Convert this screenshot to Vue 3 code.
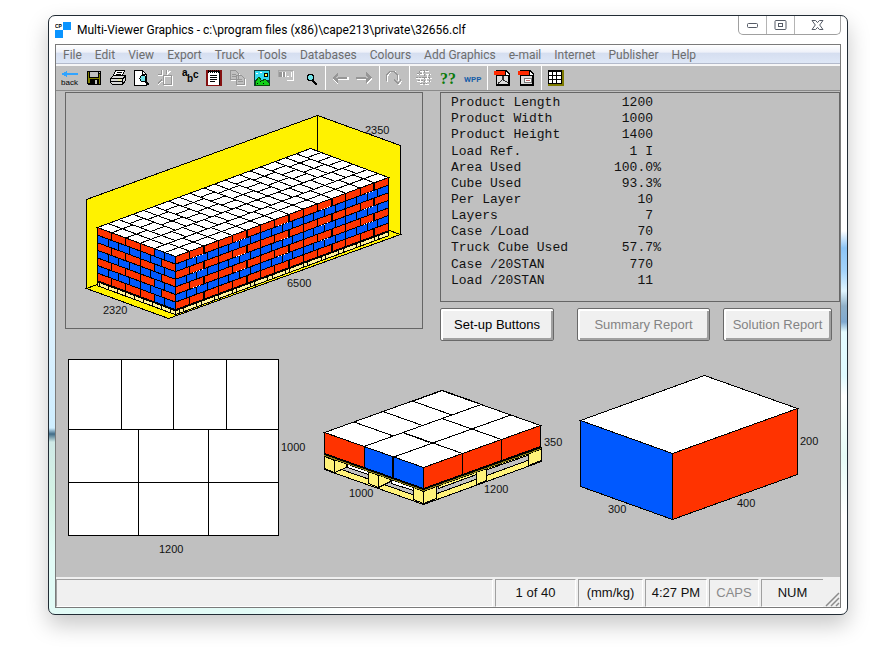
<script setup>
const menus = ['File', 'Edit', 'View', 'Export', 'Truck', 'Tools', 'Databases', 'Colours', 'Add Graphics', 'e-mail', 'Internet', 'Publisher', 'Help']

const toolGroups = [
  ['back', 'save', 'print', 'preview', 'fit', 'labels', 'notes', 'copy', 'picture', 'layout', 'search'],
  ['previous', 'next'],
  ['rotate'],
  ['analyse', 'help', 'wpp'],
  ['pdf', 'pdf report'],
  ['pattern'],
]

const facts = [
  ['Product Length', '1200', ''],
  ['Product Width', '1000', ''],
  ['Product Height', '1400', ''],
  ['Load Ref.', '1 I', '', true],
  ['Area Used', '100.0', '%'],
  ['Cube Used', '93.3', '%'],
  ['Per Layer', '10', ''],
  ['Layers', '7', ''],
  ['Case /Load', '70', ''],
  ['Truck Cube Used', '57.7', '%'],
  ['Case /20STAN', '770', '', true],
  ['Load /20STAN', '11', ''],
]

const RED = '#ff3300'
const BLUE = '#0059ff'

// Oblique projection: u runs along the right face, v along the left face, d is the drop below the top.
function projector(front, right, left, lengthU, lengthV) {
  return (u, v, d = 0) => [
    front[0] + ((right[0] - front[0]) * u) / lengthU + ((left[0] - front[0]) * v) / lengthV,
    front[1] + ((right[1] - front[1]) * u) / lengthU + ((left[1] - front[1]) * v) / lengthV + d,
  ]
}
const pts = (list) => list.map((p) => p.map((n) => n.toFixed(1)).join(',')).join(' ')

// One layer of a 1200 x 1000 load: two rows of three cases, one row of four.
function layerCells() {
  const cells = []
  for (let i = 0; i < 3; i++) {
    cells.push([i * 400, 0, 400, 300], [i * 400, 300, 400, 300])
  }
  for (let i = 0; i < 4; i++) cells.push([i * 300, 600, 300, 400])
  return cells
}
function topFace(p, [u, v, w, h]) {
  return pts([p(u, v), p(u + w, v), p(u + w, v + h), p(u, v + h)])
}

// Pallet view
const pp = projector([423.5, 467.5], [540.5, 425.5], [324.5, 432.5], 1200, 1000)
const palletTops = layerCells().map((c) => topFace(pp, c))
const palletSides = []
for (let i = 0; i < 3; i++) {
  palletSides.push({ fill: RED, points: pts([pp(i * 400, 0), pp(i * 400 + 400, 0), pp(i * 400 + 400, 0, 21), pp(i * 400, 0, 21)]) })
}
for (const [v, w, fill] of [[0, 300, BLUE], [300, 300, BLUE], [600, 400, RED]]) {
  palletSides.push({ fill, points: pts([pp(0, v), pp(0, v + w), pp(0, v + w, 21), pp(0, v, 21)]) })
}

// Truck view
const tp = projector([175.5, 256.5], [388.5, 177.5], [97.5, 227.5], 6000, 2200)
const LAYER = 7.6
const truckTops = []
for (let n = 0; n < 5; n++) {
  for (const [u, v, w, h] of layerCells()) truckTops.push(topFace(tp, [u + n * 1200, v, w, h]))
}
for (let n = 0; n < 6; n++) {
  for (const [u, v, w, h] of layerCells()) truckTops.push(topFace(tp, [v + n * 1000, 1000 + u, h, w]))
}
const truckSides = []
const gaps = []
const glints = []
for (let l = 0; l < 7; l++) {
  const a = l * LAYER
  const b = a + LAYER
  const odd = l % 2 === 0
  const size = odd ? 400 : 300
  for (let u = 0; u < 6000; u += size) {
    truckSides.push({ fill: odd ? RED : BLUE, points: pts([tp(u, 0, a), tp(u + size, 0, a), tp(u + size, 0, b), tp(u, 0, b)]) })
  }
  const cells = odd
    ? [[0, 300, BLUE], [300, 300, BLUE], [600, 400, RED], [1000, 400, RED], [1400, 400, RED], [1800, 400, RED]]
    : [[0, 400, RED], [400, 300, BLUE], [700, 300, BLUE], [1000, 300, BLUE], [1300, 300, BLUE], [1600, 300, BLUE], [1900, 300, BLUE]]
  for (const [v, w, fill] of cells) {
    truckSides.push({ fill, points: pts([tp(0, v, a), tp(0, v + w, a), tp(0, v + w, b), tp(0, v, b)]) })
  }
  if (odd) {
    for (let n = 0; n < 5; n++) {
      gaps.push(pts([tp(n * 1200 + 800, 0, a), tp(n * 1200 + 800, 0, b)]))
      if (l < 6) glints.push(pts([tp(n * 1200 + 500, 0, b), tp(n * 1200 + 760, 0, b)]))
    }
  }
}
const BASE = 7 * LAYER
const truckPallets = [
  pts([tp(0, 0, BASE), tp(6000, 0, BASE), tp(6000, 0, BASE + 5), tp(0, 0, BASE + 5)]),
  pts([tp(0, 0, BASE), tp(0, 2200, BASE), tp(0, 2200, BASE + 5), tp(0, 0, BASE + 5)]),
]
const deckLine = pts([tp(0, 2200, BASE), tp(0, 0, BASE), tp(6000, 0, BASE)])
const posts = []
for (let u = 100; u < 6000; u += 500) posts.push(pts([tp(u, 0, BASE), tp(u, 0, BASE + 5)]), pts([tp(u + 120, 0, BASE), tp(u + 120, 0, BASE + 5)]))
for (let v = 150; v < 2200; v += 250) posts.push(pts([tp(0, v, BASE), tp(0, v, BASE + 5)]))
</script>

<template>
  <main class="window">
    <header class="titlebar">
      <svg class="app-icon" width="17" height="17" viewBox="0 0 17 17" shape-rendering="crispEdges" aria-hidden="true">
        <path d="M8 0h8v8H8zM0 8h8v8H0z" fill="#0a94ff" />
        <text x="0" y="6" class="tiny">CP</text>
      </svg>
      <h1>Multi-Viewer Graphics - c:\program files (x86)\cape213\private\32656.clf</h1>
      <div class="controls">
        <button type="button" aria-label="Minimize">
          <svg width="13" height="7" viewBox="0 0 13 7"><rect x="1.5" y="1.5" width="10" height="4" rx="1" fill="#fff" stroke="#555b66" /></svg>
        </button>
        <button type="button" aria-label="Maximize">
          <svg width="13" height="11" viewBox="0 0 13 11"><rect x="1" y=".5" width="11" height="9" rx="1" fill="#fff" stroke="#555b66" /><rect x="4.5" y="3.5" width="4" height="3" fill="#fff" stroke="#555b66" /></svg>
        </button>
        <button type="button" class="close" aria-label="Close">
          <svg width="13" height="11" viewBox="0 0 13 11"><path d="M1 .5h3.6L6.500 2.600 8.400.5H12L8.700 5 12 9.500H8.400L6.500 7.400 4.600 9.500H1L4.300 5z" fill="#fff" stroke="#555b66" /></svg>
        </button>
      </div>
    </header>

    <div class="frame">
      <nav class="menubar">
        <button v-for="m in menus" :key="m" type="button">{{ m }}</button>
      </nav>

      <div class="toolbar">
        <div v-for="(group, g) in toolGroups" :key="g" class="group">
          <button v-for="t in group" :key="t" type="button" :aria-label="t">
            <svg width="24" height="24" viewBox="0 0 24 24" shape-rendering="crispEdges">
              <g v-if="t === 'back'">
                <path d="M5 7h15v2H5zM4 7h2v2H4zM6 6h2v4H6zM8 5h1v6H8z" fill="#31a4ff" />
                <text x="3" y="19" class="back-text">back</text>
              </g>
              <g v-else-if="t === 'save'">
                <path d="M5 5h14v14H6l-1-1z" fill="#000" />
                <path d="M6 6h1v11H6zM17 8h1v10h-1zM7 12h10v1H7zM6 12h2v5H6z" fill="#808000" />
                <path d="M8 6h8v5H8z" fill="#c0c0c0" /><path d="M13 14h2v4h-2zM17 6h1v1h-1z" fill="#c0c0c0" />
              </g>
              <g v-else-if="t === 'print'">
                <path d="M9.500 4.500h9l-2 5h-9z" fill="#fff" stroke="#000" />
                <path d="M11 6.500h5M10 8.500h5" stroke="#000" />
                <path d="M4.500 12.500l3-3h12v5l-3 4h-10l-2-2z" fill="#d8d8d8" stroke="#000" />
                <path d="M4 12.500h13M16.500 12v7M17 12.500l3-3M5 15.500h11" stroke="#000" fill="none" />
                <path d="M12 13h3v2h-3z" fill="#e8e8a0" />
              </g>
              <g v-else-if="t === 'preview'">
                <path d="M4.500 4.500h8l4 4v11h-12z" fill="#fff" stroke="#000" />
                <path d="M12.500 4.500v4h4" fill="none" stroke="#000" />
                <circle cx="13" cy="12.500" r="3" fill="#6fe3e8" stroke="#000" />
                <path d="M15 15l4 4" stroke="#000" stroke-width="2" />
              </g>
              <g v-else-if="t === 'fit'" fill="none">
                <path d="M10.500 10.500h8v9h-8zM8.500 4v5M4 9.500h5M13.500 4v4l3-3M6 15.500h3M4 18.500l4-4" stroke="#fff" />
                <path d="M9.500 9.500h8v9h-8zM7.500 4v4.500H4M12.500 4v4M4 17.500l4-4" stroke="#969696" />
              </g>
              <g v-else-if="t === 'labels'" class="abc">
                <text x="4" y="10">a</text><text x="9" y="16">b</text><text x="15" y="12">c</text>
              </g>
              <g v-else-if="t === 'notes'">
                <path d="M4 4h16v16H4z" fill="#851010" />
                <path d="M7 5h11v14H7z" fill="#000" /><path d="M6 6h11v13H6z" fill="#fff" />
                <path d="M6 5.500h11" stroke="#000" stroke-dasharray="1 1" stroke-width="3" />
                <path d="M8 9.500h7M8 11.500h7M8 13.500h7M8 15.500h5" stroke="#000" />
              </g>
              <g v-else-if="t === 'copy'" fill="#c0c0c0">
                <path d="M5.500 5.500h5l3 3v6h-8zM11.500 10.500h5l3 3v6h-8z" stroke="#fff" />
                <path d="M4.500 4.500h5l3 3v6h-8zM10.500 9.500h5l3 3v6h-8z" stroke="#969696" />
                <path d="M6 8.500h4M6 10.500h4M12 13.500h4M12 15.500h5" stroke="#969696" />
              </g>
              <g v-else-if="t === 'picture'">
                <path d="M4 4h16v16H4z" fill="#0c3d3a" /><path d="M5 5h14v9H5z" fill="#35d9ee" />
                <path d="M14 7h3v3h-3z" fill="#ffff40" stroke="#000" />
                <path d="M5 19v-3l4-5 3 4 3-2 4 4v2z" fill="#12d018" stroke="#064d08" />
                <path d="M7 17h1v1H7zM10 15h1v1h-1zM13 17h1v1h-1z" fill="#000" />
                <path d="M6 7h2v1H6zM10 6h2v1h-2z" fill="#fff" />
              </g>
              <g v-else-if="t === 'layout'">
                <path d="M4 4.500h15M4.500 5v6" stroke="#a8a8a8" /><path d="M13 14.500h6.500v-10" fill="none" stroke="#fff" />
                <path d="M5 6h3v5H5zM9 6h2v5H9z" fill="#969696" /><path d="M8.500 6v5M11.500 6v5M13 10.500h2M17.500 6v5" stroke="#fff" />
              </g>
              <g v-else-if="t === 'search'">
                <path d="M10 8h5v1h1v5h-1v1h-5v-1H9V9h1z" fill="#000" />
                <path d="M11 9h3v1h1v3h-1v1h-3v-1h-1v-3h1z" fill="#6fe3e8" />
                <path d="M14 14h2v1h1v1h1v1h1v2h-2v-1h-1v-1h-1v-1h-1z" fill="#000" />
              </g>
              <g v-else-if="t === 'previous'">
                <path d="M5 13l5-5v3h11v3H10v5z" fill="#fff" /><path d="M4 12l6-6v5h9v2h-9v4z" fill="#969696" /><path d="M7 12h3v-2z" fill="#c0c0c0" />
              </g>
              <g v-else-if="t === 'next'">
                <path d="M20 13l-5-5v3H5v3h10v5z" fill="#fff" /><path d="M20 12l-6-6v5H4v2h10v4z" fill="#969696" /><path d="M17 12h-3v-2z" fill="#c0c0c0" />
              </g>
              <g v-else-if="t === 'rotate'" fill="none">
                <path d="M5.500 16v-6l4-5h3l4 5v5M13 15l4 4 3-4" stroke="#fff" />
                <path d="M4.500 15v-6l4-4h3l4 4v5M12 13.500l4 4 3-4" stroke="#969696" />
              </g>
              <g v-else-if="t === 'analyse'" fill="none">
                <path d="M8 5.500h9M5 8.500h7M14 8.500h5M4 12.500h16M5 15.500h6M13 15.500h6M8 18.500h3M13 18.500h4M10.500 5v4M15.500 8v4M8.500 12v5M14.500 13v6" stroke="#fff" />
                <path d="M8 4.500h8M5 7.500h6M4 11.500h15M6 14.500h5M8 17.500h7M7.500 5v4M12.500 5v12M17.500 8v8" stroke="#969696" stroke-dasharray="2 1" />
              </g>
              <text v-else-if="t === 'help'" x="4" y="18" class="help-text">??</text>
              <text v-else-if="t === 'wpp'" x="4" y="16" class="wpp-text">WPP</text>
              <g v-else-if="t === 'pdf' || t === 'pdf report'">
                <path d="M6 4h10l4 4v12H6z" fill="#000" />
                <path d="M7 10h8V6l3 3v9H7z" fill="#dedede" />
                <path d="M15 5l4 4h-4z" fill="#fff" />
                <path d="M15.500 5v4.500H19" fill="none" stroke="#000" />
                <path d="M4 5h11v4H4z" fill="#ff2a00" />
                <path v-if="t === 'pdf'" d="M8 17.500l4-3 1-4 1 4 4 2" fill="none" stroke="#333" />
                <path v-else d="M10.500 12.500h7v4h-7z" fill="#fff" stroke="#777" />
                <path v-if="t === 'pdf report'" d="M12 14.500h4" stroke="#b66" />
              </g>
              <g v-else-if="t === 'pattern'">
                <path d="M4 4h16v16H4z" fill="#7d7a00" /><path d="M4 4h14v14H4z" fill="#000" />
                <path d="M5 6h3v3H5zM9 6h3v3H9zM13 6h4v3h-4zM5 10h3v3H5zM9 10h3v3H9zM13 10h4v3h-4zM5 14h3v3H5zM9 14h3v3H9zM13 14h4v3h-4z" fill="#fff" />
              </g>
            </svg>
          </button>
        </div>
      </div>

      <section class="content">
        <div class="top">
          <div class="truck">
            <svg class="drawing" viewBox="66 93 356 235" shape-rendering="crispEdges" role="img" aria-label="Truck load">
              <g fill="#fff200" stroke="#000">
                <path d="M86.500 199.500L317.500 115.500V204.500L86.500 288.500z" />
                <path d="M317.500 115.500L400.500 145.500V234.500L317.500 204.500z" />
                <path d="M86.500 288.500L168.500 318.500 400.500 234.500 317.500 204.500z" />
              </g>
              <polygon v-for="(p, i) in truckPallets" :key="'p' + i" :points="p" fill="#fff29a" stroke="#000" />
              <polyline v-for="(p, i) in posts" :key="'o' + i" :points="p" stroke="#000" />
              <polyline :points="deckLine" fill="none" stroke="#000" stroke-width="3" />
              <polygon v-for="(p, i) in truckTops" :key="'t' + i" :points="p" fill="#fff" stroke="#000" />
              <polygon v-for="(s, i) in truckSides" :key="'s' + i" :points="s.points" :fill="s.fill" stroke="#000" />
              <polyline v-for="(p, i) in gaps" :key="'g' + i" :points="p" stroke="#000" stroke-width="2" />
              <polyline v-for="(p, i) in glints" :key="'w' + i" :points="p" stroke="#fff" stroke-dasharray="1 2" />
              <g class="dim">
                <text x="365" y="134">2350</text>
                <text x="287" y="287">6500</text>
                <text x="103" y="314">2320</text>
              </g>
            </svg>
          </div>
          <div class="side">
            <div class="facts">
              <table>
                <tbody>
                  <tr v-for="f in facts" :key="f[0]" :class="{ spaced: f[3] }">
                    <th scope="row">{{ f[0] }}</th>
                    <td>{{ f[1] }}</td>
                    <td class="unit">{{ f[2] }}</td>
                  </tr>
                </tbody>
              </table>
            </div>
            <div class="actions">
              <button type="button" class="setup">Set-up Buttons</button>
              <button type="button" class="summary" disabled>Summary Report</button>
              <button type="button" class="solution" disabled>Solution Report</button>
            </div>
          </div>
        </div>

        <div class="bottom">
          <svg class="drawing plan" viewBox="56 341 254 236" shape-rendering="crispEdges" role="img" aria-label="Layer plan">
            <path d="M68.500 359.500h210v176h-210zM68.500 429.500h210M68.500 482.500h210M121.500 359.500v70M173.500 359.500v70M226.500 359.500v70M138.500 429.500v106M208.500 429.500v106" fill="#fff" stroke="#000" />
            <g class="dim"><text x="281" y="451">1000</text><text x="159" y="553">1200</text></g>
          </svg>

          <svg class="drawing pallet" viewBox="310 341 260 236" shape-rendering="crispEdges" role="img" aria-label="Pallet load">
            <g fill="#fff27a" stroke="#000">
              <path d="M324.500 463.500L423.500 498.500V504.500L324.500 469.500z" />
              <path d="M423.500 498.500L541.500 455.500V461.500L423.500 504.500z" />
              <path d="M347.500 463.500l21 8v3l-21-7zM391.500 479.500l22 8v3l-22-7z" fill="#fff" />
              <path d="M438.500 488.500l38-14v-4l-38 14zM487.500 469.500l40-14v-4l-40 14z" />
              <path d="M324.500 456.500l10 4v12l-10-4zM334.500 460.500l12 2v5l-12 5z" />
              <path d="M368.500 471.500l10 4v12l-10-4zM378.500 475.500l12 1v5l-12 6z" />
              <path d="M413.500 487.500l10 4v12l-10-4zM423.500 491.500l13-5v12l-13 5z" />
              <path d="M476.500 471.500l10-4v13l-10 4zM528.500 452.500l13-5v13l-13 5z" />
            </g>
            <path d="M324.500 454.500L423.500 489.500 541.500 447.500" fill="none" stroke="#000" stroke-width="4" />
            <path d="M324.500 455.500L423.500 490.500 541.500 448.500" fill="none" stroke="#8a8118" stroke-width="1" />
            <polygon v-for="(p, i) in palletTops" :key="'t' + i" :points="p" fill="#fff" stroke="#000" />
            <polygon v-for="(s, i) in palletSides" :key="'s' + i" :points="s.points" :fill="s.fill" stroke="#000" />
            <path d="M414.500 400.500l28-10 37 13M402.500 432.500l27 10M392.500 457v21" fill="none" stroke="#000" />
            <g class="dim"><text x="544" y="446">350</text><text x="349" y="497">1000</text><text x="484" y="493">1200</text></g>
          </svg>

          <svg class="drawing carton" viewBox="570 341 270 236" shape-rendering="crispEdges" role="img" aria-label="Case">
            <g stroke="#000">
              <path d="M580.500 420.500L704.500 375.500 797.500 408.500 672.500 453.500z" fill="#fff" />
              <path d="M580.500 420.500L672.500 453.500V519.500L580.500 486.500z" fill="#0059ff" />
              <path d="M672.500 453.500L797.500 408.500V474.500L672.500 519.500z" fill="#ff3300" />
            </g>
            <g class="dim"><text x="800" y="445">200</text><text x="608" y="513">300</text><text x="737" y="507">400</text></g>
          </svg>
        </div>
      </section>

      <footer class="status">
        <div class="cell message"></div>
        <div class="cell count">1 of 40</div>
        <div class="cell units">(mm/kg)</div>
        <div class="cell clock">4:27 PM</div>
        <div class="cell caps">CAPS</div>
        <div class="cell num">NUM</div>
        <svg class="grip" width="15" height="15" viewBox="0 0 15 15" aria-hidden="true">
          <path d="M1 14L14 1M6 14l8-8M11 14l3-3" stroke="#8c8c8c" stroke-width="1.500" />
        </svg>
      </footer>
    </div>
  </main>
</template>

<style>
body {
  margin: 0;
  background: #fff;
}
</style>

<style scoped>
* {
  box-sizing: border-box;
}
button {
  font: inherit;
  color: inherit;
  margin: 0;
}
.window {
  display: flex;
  flex-direction: column;
  min-height: calc(100vh - 50px);
  margin: 15px 46px 35px 48px;
  padding: 0 6px 6px;
  border: 1px solid #222c35;
  border-radius: 7px;
  background:
    linear-gradient(#fff 0 70px, #d5efff 360px, #cfeeff 412px, #3f6a86 418px, #cfe9e6 426px, #d4f2e4 480px, #e2fbf6 540px) left / 6px 100% no-repeat,
    linear-gradient(#fff 0 215px, #8cc4f5 232px, #a4d3fa 255px, #e0f5ff 275px, #8fb0c8 290px, #7fa9d0 306px, #e4fbff 316px, #dffaff 360px, #fff 380px, #e6fbf6 440px, #fff 500px) right / 6px 100% no-repeat,
    linear-gradient(90deg, #e2fbf6 200px, #fff 300px) bottom / 100% 6px no-repeat,
    #fff;
  box-shadow: 0 10px 22px rgba(0, 0, 0, 0.22);
  font-family: "Liberation Sans", Arial, sans-serif;
}
.titlebar {
  display: flex;
  height: 28px;
  gap: 5px;
}
.app-icon {
  margin-top: 6px;
}
.tiny {
  font: bold 5px "Liberation Sans", sans-serif;
}
h1 {
  flex: 1;
  margin: 0;
  font: 400 12px/28px Roboto, sans-serif;
  color: #000;
}
.controls {
  display: flex;
  height: 19px;
  border: 1px solid #a0a0a0;
  border-top: 0;
  border-radius: 0 0 5px 5px;
}
.controls button {
  display: flex;
  align-items: center;
  justify-content: center;
  width: 28px;
  padding: 0;
  border: 0;
  border-right: 1px solid #b4b4b4;
  background: transparent;
}
.controls .close {
  width: 45px;
  border-right: 0;
}
.frame {
  flex: 1;
  display: flex;
  flex-direction: column;
  border: 1px solid #7a7a7a;
  background: #c0c0c0;
}
.menubar {
  display: flex;
  gap: 13px;
  height: 19px;
  padding-left: 7px;
  border-bottom: 1px solid #b3bacb;
  background: linear-gradient(#fff 0, #eef1f9 40%, #d5def0 45%, #dee7f6 100%);
}
.menubar button {
  padding: 0;
  border: 0;
  background: transparent;
  font: 12px/20px Roboto, sans-serif;
  color: #6d6d6d;
  white-space: nowrap;
}
.toolbar {
  display: flex;
  height: 27px;
  padding-left: 2px;
  border-top: 2px solid #f6f6f6;
  border-bottom: 1px solid #8a8a8a;
}
.group {
  display: flex;
  padding-right: 3px;
  margin-right: 2px;
  border-right: 1px solid #fff;
}
.group:last-child {
  border-right: 0;
}
.toolbar button {
  display: block;
  width: 24px;
  height: 24px;
  padding: 0;
  border: 0;
  background: transparent;
}
.toolbar svg {
  display: block;
}
.back-text {
  font: 8px "Liberation Sans", sans-serif;
}
.abc {
  font: bold 10px "Liberation Sans", sans-serif;
}
.help-text {
  font: bold 16px "Liberation Serif", serif;
  fill: #0a7a0a;
}
.wpp-text {
  font: bold 8px Roboto, sans-serif;
  fill: #1a5fa8;
}
.content {
  flex: 1;
  padding: 1px 0 0 9px;
}
.top {
  display: grid;
  grid-template-columns: 358fr 400fr;
  column-gap: 17px;
  align-items: start;
}
.truck,
.facts {
  border: 1px solid #666;
}
.drawing {
  display: block;
  width: 100%;
  height: auto;
}
.dim {
  font: 11px "Liberation Sans", Arial, sans-serif;
  fill: #111;
}
.facts {
  height: 210px;
  padding: 2px 10px;
}
table {
  border-collapse: collapse;
  font: 13px/16px "Liberation Mono", monospace;
  color: #111;
}
th,
td {
  padding: 0;
  font-weight: 400;
  text-align: left;
}
th {
  width: 142px;
}
td {
  width: 60px;
  text-align: right;
}
.unit {
  width: 8px;
}
.spaced th,
.spaced td {
  padding-top: 1px;
}
.actions {
  display: flex;
  gap: 13px;
  padding-top: 6px;
}
.actions button {
  height: 33px;
  padding: 0;
  border: 1px solid #696969;
  border-radius: 2px;
  background: #f0f0f0;
  box-shadow: inset 2px 2px #fff, inset -2px -2px #a0a0a0;
  font-size: 13px;
  color: #000;
}
.actions button:disabled {
  color: #838383;
}
.setup {
  width: 114px;
  margin-right: 10px;
}
.summary {
  width: 133px;
}
.solution {
  width: 109px;
}
.bottom {
  display: flex;
  margin: 0 0 0 -9px;
}
.plan {
  flex: 254 1 0;
}
.pallet {
  flex: 260 1 0;
}
.carton {
  flex: 270 1 0;
}
.bottom .drawing {
  min-width: 0;
}
.status {
  display: flex;
  gap: 2px;
  height: 30px;
  padding-top: 2px;
  background: #f0f0f0;
  font-size: 13px;
  line-height: 26px;
  text-align: center;
  color: #111;
}
.cell {
  border: 1px solid #a0a0a0;
  border-right-color: #fff;
  border-bottom-color: #fff;
}
.message {
  flex: 1;
}
.count {
  width: 81px;
}
.units {
  width: 65px;
}
.clock {
  width: 62px;
}
.caps {
  width: 50px;
  color: #8a8a8a;
}
.num {
  width: 62px;
  border-right: 0;
}
.grip {
  align-self: flex-end;
}
</style>
